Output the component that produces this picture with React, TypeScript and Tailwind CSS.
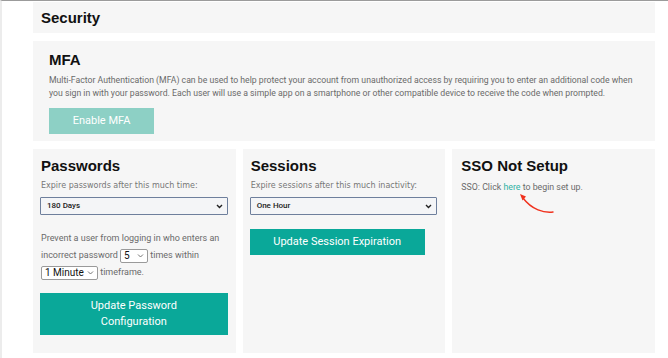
import React from "react";

const body = { fontFamily: "Roboto, 'Liberation Sans', sans-serif" };
const head = { fontFamily: "'Liberation Sans', Arial, sans-serif" };
const label = { fontFamily: "'DejaVu Sans', 'Liberation Sans', sans-serif" };

function BigSelect({ value }: { value: string }) {
  return (
    <div className="flex items-center justify-between h-[18px] border border-[#6e7f9c] bg-[#f4f5f7] rounded-[1px] pl-[6px] pr-[4px]">
      <span className="text-[8px] font-medium text-[#222]" style={body}>{value}</span>
      <svg width="7" height="5" viewBox="0 0 7 5"><path d="M1 1 L3.5 3.5 L6 1" fill="none" stroke="#222" strokeWidth="1.4" /></svg>
    </div>
  );
}

function SmallSelect({ value, w }: { value: string; w: string }) {
  return (
    <span className={`inline-flex items-center justify-between h-[14px] border border-[#9a9a9a] bg-white rounded-[2px] pl-[3px] pr-[3px] align-middle ${w}`}>
      <span className="text-[10px] text-[#111] leading-none" style={body}>{value}</span>
      <svg width="7" height="4" viewBox="0 0 7 4"><path d="M1 0.5 L3.5 3 L6 0.5" fill="none" stroke="#666" strokeWidth="0.9" /></svg>
    </span>
  );
}

export default function App() {
  return (
    <div className="w-[668px] h-[358px] bg-white border-t border-[#9b9b9b] border-l-2 border-l-[#ececec] overflow-hidden" style={body}>
      <div className="ml-[31px] w-[622px] pt-[1px] flex flex-col">
        <div className="h-[31px] bg-[#f6f6f6] flex items-center pl-[8px]">
          <h1 className="text-[15px] font-bold text-[#111] leading-none" style={head}>Security</h1>
        </div>
        <div className="mt-[8px] h-[100px] bg-[#f6f6f6] pl-[16px] pt-[10px]">
          <h2 className="text-[15px] font-bold text-[#111] leading-[18px]" style={head}>MFA</h2>
          <p className="mt-[5px] text-[8.7px] leading-[13px] text-[#6a6a6a]">
            Multi-Factor Authentication (MFA) can be used to help protect your account from unauthorized access by requiring you to enter an additional code when
            <br />
            you sign in with your password. Each user will use a simple app on a smartphone or other compatible device to receive the code when prompted.
          </p>
          <button className="mt-[8px] w-[105px] h-[26px] bg-[#8dd0c5] text-white text-[11px] flex items-center justify-center">Enable MFA</button>
        </div>
        <div className="mt-[8px] grid grid-cols-3 gap-[7px] h-[204px]">
          <div className="bg-[#f6f6f6] pl-[7px] pr-[8px] pt-[8px]">
            <h2 className="pl-[1px] text-[15px] font-bold text-[#111] leading-[18px]" style={head}>Passwords</h2>
            <div className="pl-[1px] mt-[5px] text-[8px] text-[#777] leading-[12px]" style={label}>Expire passwords after this much time:</div>
            <div className="mt-[5px]"><BigSelect value="180 Days" /></div>
            <div className="pl-[1px] mt-[15px] text-[9px] leading-[17px] text-[#6a6a6a]">
              <div>Prevent a user from logging in who enters an</div>
              <div>incorrect password <SmallSelect value="5" w="w-[28px]" /> times within</div>
              <div><SmallSelect value="1 Minute" w="w-[57px]" /> timeframe.</div>
            </div>
            <button className="mt-[12px] w-full h-[42px] bg-[#0aa899] text-white text-[11px] leading-[16px] flex flex-col items-center justify-center">
              <span>Update Password</span>
              <span>Configuration</span>
            </button>
          </div>
          <div className="bg-[#f6f6f6] pl-[7px] pr-[8px] pt-[8px]">
            <h2 className="pl-[1px] text-[15px] font-bold text-[#111] leading-[18px]" style={head}>Sessions</h2>
            <div className="pl-[1px] mt-[5px] text-[8px] text-[#777] leading-[12px]" style={label}>Expire sessions after this much inactivity:</div>
            <div className="mt-[5px]"><BigSelect value="One Hour" /></div>
            <button className="mt-[14px] w-[175px] h-[26px] bg-[#0aa899] text-white text-[11px] flex items-center justify-center">Update Session Expiration</button>
          </div>
          <div className="relative bg-[#f6f6f6] px-[8px] pt-[8px]">
            <h2 className="pl-[1px] text-[15px] font-bold text-[#111] leading-[18px]" style={head}>SSO Not Setup</h2>
            <div className="pl-[1px] mt-[6px] text-[8.8px] leading-[12px] text-[#6a6a6a]">
              SSO: Click <span className="text-[#2fb2a4]">here</span> to begin set up.
            </div>
            <svg className="absolute left-[64px] top-[43px]" width="42" height="24" viewBox="0 0 42 24">
              <path d="M37 20 C 28 21, 16 18, 7 6" fill="none" stroke="#f0321e" strokeWidth="1.4" strokeLinecap="round" />
              <path d="M4 2 L10 4.5 L6.5 8.5 Z" fill="#f0321e" />
            </svg>
          </div>
        </div>
      </div>
    </div>
  );
}
